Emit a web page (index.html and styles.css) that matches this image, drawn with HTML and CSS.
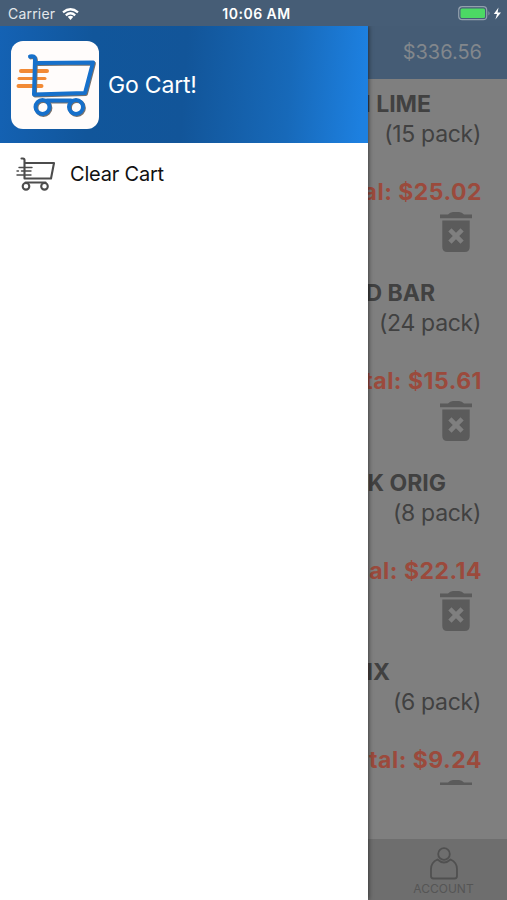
FILE: index.html
```
<!DOCTYPE html>
<html lang="en">
<head>
  <meta charset="UTF-8">
  <title>Go Cart!</title>
  <link rel="stylesheet" href="styles.css">
</head>
<body>

<!-- Shared icons -->
<svg class="icon-defs" width="0" height="0">
  <symbol id="trash" viewBox="0 0 32 40">
    <path d="M0 2.500h8q2-2.500 5-2.500h6q3 0 5 2.500h8v3.700H0z"/>
    <path fill-rule="evenodd" d="M2.300 8.500h27.400v26.500q0 5-5 5h-17.400q-5 0-5-5zM8.300 19.500l4.500 4.500-4.500 4.500 3.200 3.200 4.500-4.500 4.500 4.500 3.200-3.200-4.500-4.500 4.500-4.500-3.200-3.200-4.500 4.500-4.500-4.500z"/>
  </symbol>
  <symbol id="cart" viewBox="0 0 88 88">
    <path d="M19 15.500q5-1 5 2.500l-1 35.500 51-1.500 8-30.500L25 22M36 59.500h24"/>
    <circle cx="31.500" cy="66" r="7"/>
    <circle cx="65" cy="66" r="7"/>
  </symbol>
</svg>

<div class="screen">
  <div class="status-bar">
    <div class="carrier">
      <span>Carrier</span>
      <svg width="17" height="12" viewBox="0 0 17 12" fill="none" stroke="#fff" stroke-width="2.300">
        <path d="M1 4.300Q8.500-1.800 16 4.300M3.800 7.300Q8.500 3.300 13.200 7.300"/>
        <path d="M5.700 8.800Q8.500 6.700 11.300 8.800L8.500 12z" fill="#fff" stroke="none"/>
      </svg>
    </div>
    <span class="time">10:06 AM</span>
    <svg class="battery" width="44" height="15" viewBox="0 0 44 15">
      <rect x=".7" y=".7" width="28" height="13" rx="3.500" fill="none" stroke="#93a0ad" stroke-width="1.200"/>
      <rect x="2.500" y="2.500" width="24.500" height="9.500" rx="1.500" fill="#4cd964"/>
      <path d="M30.500 5q2 2.300 0 4.600z" fill="#93a0ad"/>
      <path d="M40.500 1.500L35.800 8h3.200l-1.600 5.500L43 6.500h-3.400z" fill="#fff"/>
    </svg>
  </div>

  <div class="total-bar">$336.56</div>

  <div class="items">
    <div class="item">
      <div class="name lime">H LIME</div>
      <div class="pack">(15 pack)</div>
      <div class="item-total">Total: $25.02</div>
      <svg class="trash"><use href="#trash"/></svg>
    </div>
    <div class="item">
      <div class="name bar">D BAR</div>
      <div class="pack">(24 pack)</div>
      <div class="item-total">Total: $15.61</div>
      <svg class="trash"><use href="#trash"/></svg>
    </div>
    <div class="item">
      <div class="name orig">K ORIG</div>
      <div class="pack">(8 pack)</div>
      <div class="item-total">Total: $22.14</div>
      <svg class="trash"><use href="#trash"/></svg>
    </div>
    <div class="item">
      <div class="name mix">IX</div>
      <div class="pack">(6 pack)</div>
      <div class="item-total">Total: $9.24</div>
      <svg class="trash"><use href="#trash"/></svg>
    </div>
  </div>

  <div class="tab-bar">
    <div class="tab">
      <svg width="28" height="33" viewBox="0 0 28 33" fill="none" stroke="#505050" stroke-width="1.800">
        <circle cx="14" cy="7" r="5.800"/>
        <path d="M7.500 12.500Q1 15.500 1 22v7q0 2.500 2.500 2.500h21q2.500 0 2.500-2.500v-7q0-6.500-6.500-9.500Q14 18.500 7.500 12.500z"/>
      </svg>
      <span>ACCOUNT</span>
    </div>
  </div>

  <!-- Side menu -->
  <div class="drawer">
    <div class="drawer-header">
      <svg class="logo" viewBox="0 0 88 88" fill="none" stroke-width="4" stroke-linecap="round" stroke-linejoin="round">
        <g stroke="#f28a35">
          <path d="M10 30h26M7.500 45h23"/>
          <path d="M8 37.500h26" stroke-width="3"/>
        </g>
        <use href="#cart" x=".9" y=".9" width="88" height="88" stroke="#77716c"/>
        <use href="#cart" width="88" height="88" stroke="#1670cb"/>
      </svg>
      <span>Go Cart!</span>
    </div>
    <div class="menu-item">
      <svg width="40" height="34" viewBox="0 0 40 34" fill="none" stroke="#4c4c4c" stroke-width="2.100" stroke-linecap="round" stroke-linejoin="round">
        <path d="M5.500 1.500h1.500q1.500 0 1.500 1.500v18.500h26.500L38 6H9M9.500 25.500h20"/>
        <circle cx="10" cy="29.300" r="3.300"/>
        <circle cx="28.500" cy="29.300" r="3.300"/>
        <path d="M3 10.500h13M1 14h1.500M5.500 14H15M1 18h14" stroke-width="1.400"/>
      </svg>
      <span>Clear Cart</span>
    </div>
  </div>
</div>

</body>
</html>
```
FILE: styles.css
```
body {
  margin: 0;
  font-family: Inter, "Liberation Sans", sans-serif;
}

.icon-defs {
  display: block;
}

.screen {
  position: relative;
  height: 900px;
  overflow: hidden;
  background-color: #7f7f7f;
  display: flex;
  flex-direction: column;
}

/* Status bar */
.status-bar {
  flex: none;
  height: 26px;
  padding: 1px 5px 0 8px;
  box-sizing: border-box;
  background-color: #465d76;
  color: white;
  display: grid;
  grid-template-columns: 1fr auto 1fr;
  align-items: center;
  font-size: 13.5px;
}

.carrier {
  display: flex;
  align-items: center;
  gap: 7px;
  color: #e3e7eb;
  font-size: 14px;
  letter-spacing: 0.2px;
}

.time {
  font-weight: 600;
  font-size: 14px;
  letter-spacing: 0.5px;
  padding-left: 3px;
}

.battery {
  justify-self: end;
}

.total-bar {
  flex: none;
  height: 53px;
  line-height: 53px;
  padding-right: 25px;
  background-color: #455c75;
  color: #82878c;
  font-size: 20px;
  text-align: right;
}

/* Cart items */
.items {
  flex: none;
  height: 706px;
  overflow: hidden;
}

.item {
  height: 189.4px;
  padding: 10px 26px 0 0;
  box-sizing: border-box;
  display: flex;
  flex-direction: column;
  align-items: flex-end;
  color: #414141;
  font-size: 23px;
  line-height: 30px;
}

.name {
  font-weight: 700;
}

.name.lime {
  margin-right: 50px;
}

.name.bar {
  margin-right: 46px;
}

.name.orig {
  margin-right: 35px;
}

.name.mix {
  margin-right: 91px;
}

.pack {
  letter-spacing: -0.3px;
}

.item-total {
  margin-top: 28px;
  margin-right: -1px;
  color: #9b4a3c;
  font-weight: 700;
  letter-spacing: 0.5px;
}

.trash {
  width: 32px;
  height: 40px;
  margin: 5px 9px 0 0;
  fill: #5b5b5b;
}

/* Bottom tabs */
.tab-bar {
  flex: none;
  margin-top: auto;
  height: 61px;
  background-color: #6e6e6e;
  display: flex;
  justify-content: flex-end;
}

.tab {
  width: 127px;
  padding-top: 8px;
  display: flex;
  flex-direction: column;
  align-items: center;
  gap: 2px;
  font-size: 12px;
  line-height: 14px;
  color: #555;
}

/* Side menu */
.drawer {
  position: absolute;
  top: 26px;
  left: 0;
  bottom: 0;
  width: 368px;
  background-color: white;
  box-shadow: 0 0 5px rgba(0, 0, 0, 0.7);
  clip-path: inset(0 -10px 0 0);
}

.drawer-header {
  height: 117px;
  padding-left: 11px;
  box-sizing: border-box;
  display: flex;
  align-items: center;
  gap: 9px;
  background: linear-gradient(94deg, #1462b4 0%, #11569b 25%, #125599 50%, #1769b9 78%, #1d80e0 98%);
  color: white;
  font-size: 23px;
  letter-spacing: -0.2px;
}

.logo {
  width: 88px;
  height: 88px;
  border-radius: 12px;
  background-color: #fffcfb;
}

.menu-item {
  height: 62px;
  padding-left: 16px;
  display: flex;
  align-items: center;
  gap: 14px;
  font-size: 20px;
  letter-spacing: -0.2px;
  color: #111;
}
```
